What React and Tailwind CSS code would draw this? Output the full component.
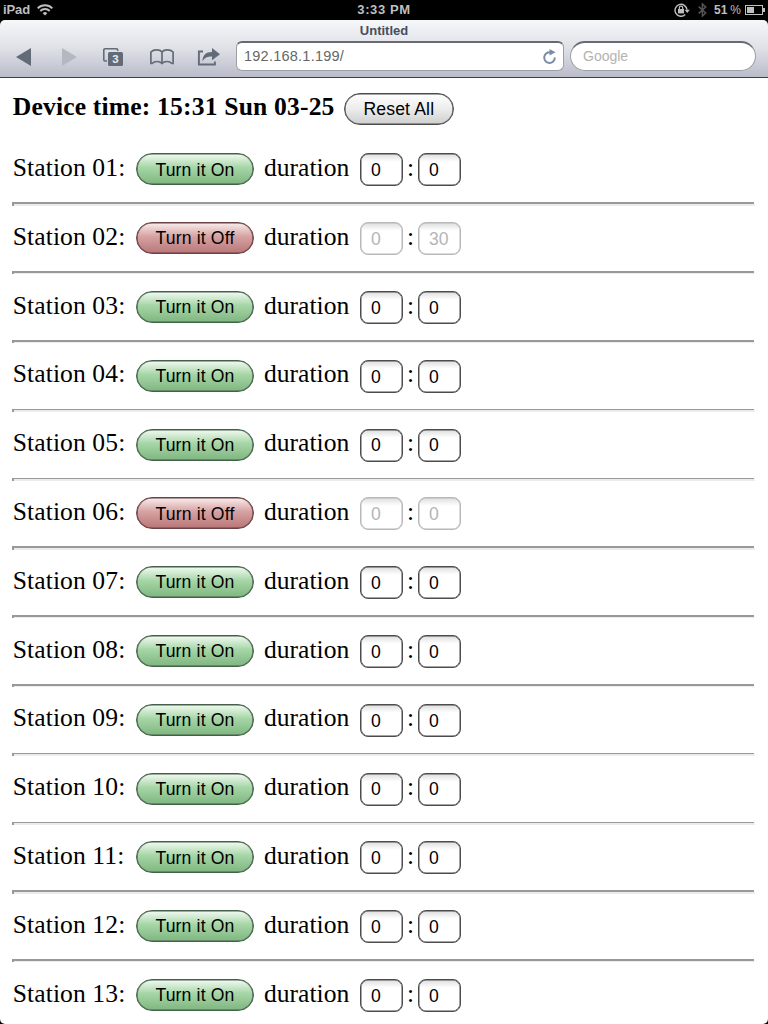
const OFF = [2, 6];
const stations = Array.from({ length: 13 }, (_, i) => ({
  id: String(i + 1).padStart(2, "0"),
  running: OFF.includes(i + 1),
  hours: "0",
  minutes: i === 1 ? "30" : "0",
}));

function StatusBar() {
  return (
    <div className="flex h-5 shrink-0 items-center bg-black font-bold text-[#bfbfbf] text-[13px] leading-5">
      <div className="flex flex-1 items-center gap-[7px] pl-[3px]">
        <span className="font-bold tracking-[-0.1px]">iPad</span>
        <svg width="16" height="12" viewBox="0 0 16 12" fill="none" stroke="#bfbfbf" strokeWidth="1.9">
          <path d="M0.7 4.3a10.3 10.3 0 0 1 14.6 0" />
          <path d="M3.3 7a6.6 6.6 0 0 1 9.4 0" />
          <path d="M8 11.6L5.7 9.2a3.3 3.3 0 0 1 4.600 0z" fill="#bfbfbf" stroke="none" />
        </svg>
      </div>
      <span className="tracking-[0.6px]">3:33 PM</span>
      <div className="flex flex-1 items-center justify-end pr-[3px]">
        <svg className="mr-[8px]" width="16" height="14" viewBox="0 0 16 14" fill="none" stroke="#bfbfbf" strokeWidth="1.4">
          <path d="M11.2 11.6A6 6 0 1 1 13 6.8" />
          <path d="M10.6 6.800h5.2L13.200 10z" fill="#bfbfbf" stroke="none" />
          <rect x="4" y="6" width="6" height="4.4" fill="#bfbfbf" stroke="none" />
          <path d="M5.3 6V4.8a1.7 1.7 0 0 1 3.4 0V6" strokeWidth="1.2" />
        </svg>
        <svg className="mr-[7px]" width="9" height="14" viewBox="0 0 9 14" fill="none" stroke="#555" strokeWidth="1.5">
          <path d="M0.7 3.6l7 6.4-3.3 3V1l3.3 3-7 6.4" />
        </svg>
        <span className="mr-[4px] text-[12px]">51<span className="ml-[3px] font-normal">%</span></span>
        <svg width="20" height="10" viewBox="0 0 20 10" fill="none">
          <rect x="0.5" y="0.5" width="17" height="9" stroke="#bfbfbf" />
          <rect x="2" y="2" width="7" height="6" fill="#bfbfbf" />
          <path d="M18 3h2v4h-2z" fill="#bfbfbf" />
        </svg>
      </div>
    </div>
  );
}

function Toolbar() {
  return (
    <div className="h-[58px] shrink-0 bg-black">
      <div className="flex h-full flex-col rounded-t-[5px] border-b border-[#3c3f47] bg-linear-to-b from-[#f6f7f9] via-[#dfe1e7] to-[#b9bcc9]">
        <div className="h-[21px] text-center text-[13px] leading-[21px] font-bold text-[#464d60]">Untitled</div>
        <div className="flex h-[30px] items-center pr-[12px] pl-[16px]">
          <svg className="mt-[1px] mr-[31px] shrink-0" width="15" height="18" viewBox="0 0 15 18"><path d="M0 9L15 0v18z" fill="#646b78" /></svg>
          <svg className="mt-[1px] mr-[26px] shrink-0" width="15" height="18" viewBox="0 0 15 18"><path d="M15 9L0 0v18z" fill="#b4b8c1" /></svg>
          <svg className="mt-[2px] mr-[27px] shrink-0" width="20" height="18" viewBox="0 0 20 18">
            <path d="M4 13H2A1.200 1.200 0 0 1 .8 11.800V2A1.200 1.200 0 0 1 2 .8h11.500A1.200 1.200 0 0 1 14.700 2v1" fill="none" stroke="#646b78" strokeWidth="1.600" />
            <rect x="5" y="4" width="15" height="14" rx="1.500" fill="#646b78" />
            <text x="12.500" y="15" textAnchor="middle" fontSize="11.500" fontWeight="bold" fill="#e8eaee" fontFamily="Liberation Sans, sans-serif">3</text>
          </svg>
          <svg className="mt-[2px] mr-[23px] shrink-0" width="24" height="16" viewBox="0 0 24 16" fill="none" stroke="#646b78" strokeWidth="1.700">
            <path d="M12 14.500V3C10 .2 3.500.2.9 3v11.500h1.200c2.500-2.700 7.500-2.700 9.900 0 2.400-2.700 7.400-2.700 9.900 0h1.200V3C20.500.2 14 .2 12 3" />
          </svg>
          <svg className="mt-[1px] mr-[15px] shrink-0" width="24" height="18" viewBox="0 0 24 18">
            <path d="M6 3.500H1.900v13h16v-3" fill="none" stroke="#646b78" strokeWidth="1.900" />
            <path d="M5.500 13.500C5.500 7 9 4 15 4V0l8 6.200-8 6.100V8.500c-4.500 0-7.500 1-9.500 5z" fill="#646b78" />
          </svg>
          <div className="flex h-[30px] w-[328px] shrink-0 items-center justify-between rounded-[6px] border border-t-2 border-[#9c9fa6] border-t-[#676a70] bg-white pr-[6px] pl-[7px]">
            <span className="text-[14.5px] tracking-[0.24px] text-[#666]">192.168.1.199/</span>
            <svg width="15" height="16" viewBox="0 0 15 16"><path d="M8.500 3.400A5.300 5.300 0 1 0 12.800 8.500" fill="none" stroke="#7b8ca6" strokeWidth="2" /><path d="M7.500 0v6.500L13.500 3.300z" fill="#7b8ca6" /></svg>
          </div>
          <div className="ml-[6px] flex h-[30px] flex-1 items-center rounded-full border border-t-2 border-[#9c9fa6] border-t-[#676a70] bg-white pl-[12px] text-[14px] text-[#b3b3b3]">Google</div>
        </div>
      </div>
    </div>
  );
}

function Field({ value, disabled }) {
  return (
    <span
      className={`mt-[0.4px] flex h-[33px] w-[43px] items-center rounded-[8px] border bg-linear-to-b from-[#dedede] to-white to-25% pt-px pl-[10px] text-[17.6px] inset-shadow-[0_0_0_0.5px] ${disabled ? "border-[#b8b8b8] text-[#b5b5b5] inset-shadow-[#b8b8b8]" : "border-[#4c4c4c] text-black inset-shadow-[#4c4c4c]"}`}
    >
      {value}
    </span>
  );
}

function Station({ id, running, hours, minutes }) {
  return (
    <div className="flex h-[68.8px] shrink-0 flex-col">
      <div className="flex h-[65.6px] items-start pt-[16.2px]">
        <span className="w-[123.2px] font-[Liberation_Serif,serif] text-[25.6px] leading-[30px] tracking-[0.08px]">Station {id}:</span>
        <button
          className={`mt-[0.4px] h-[32px] w-[118px] rounded-full border pt-[2px] text-[17.6px] leading-none tracking-[0.15px] inset-shadow-[0_0_0_0.6px] ${running ? "border-[#6b4144] bg-linear-to-b from-[#f8eded] via-[#d6a2a2] via-45% to-[#b97779] inset-shadow-[#6b4144]" : "border-[#46614a] bg-linear-to-b from-[#f2faf2] via-[#a6d6a6] via-45% to-[#7fb681] inset-shadow-[#46614a]"}`}
        >
          {running ? "Turn it Off" : "Turn it On"}
        </button>
        <span className="ml-[10px] w-[96px] font-[Liberation_Serif,serif] text-[25.6px] leading-[30px]">duration</span>
        <Field value={hours} disabled={running} />
        <span className="w-[15px] text-center font-[Liberation_Serif,serif] text-[25.6px] leading-[30px]">:</span>
        <Field value={minutes} disabled={running} />
      </div>
      <div className="-ml-[0.8px] flex h-[3.2px] flex-col border-l-2 border-[#999]">
        <div className="mr-px h-[1.6px] bg-[#999]" />
        <div className="h-[1.6px] bg-[#ececec]" />
      </div>
    </div>
  );
}

export default function App() {
  return (
    <div className="h-[1024px] w-[768px] overflow-hidden bg-black">
      <div className="flex h-full flex-col overflow-hidden rounded-b-[5px] bg-white font-[Liberation_Sans,Arial,sans-serif] text-black">
        <StatusBar />
        <Toolbar />
        <main className="flex min-h-0 flex-1 flex-col overflow-hidden px-[12.8px]">
          <div className="flex h-[58.8px] shrink-0 items-start pt-[15px]">
            <h1 className="w-[331px] font-[Liberation_Serif,serif] text-[25.6px] leading-[28px] font-bold tracking-[0.17px] whitespace-nowrap">Device time: 15:31 Sun 03-25</h1>
            <button className="h-[32px] w-[110px] rounded-full border border-[#4c4c4c] bg-linear-to-b from-white via-[#ececec] to-[#cfcfcf] pt-[2px] text-[17.6px] leading-none tracking-[0.15px] inset-shadow-[0_0_0_0.5px_#4c4c4c]">Reset All</button>
          </div>
          {stations.map((s) => (
            <Station key={s.id} {...s} />
          ))}
        </main>
      </div>
    </div>
  );
}
